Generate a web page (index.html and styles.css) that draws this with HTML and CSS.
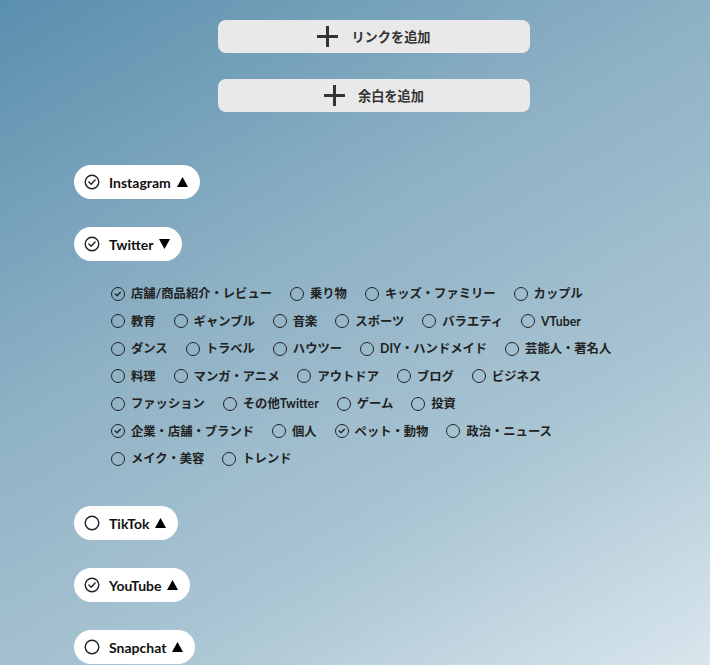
FILE: index.html
```html
<!DOCTYPE html>
<html lang="ja">
<head>
<meta charset="utf-8">
<link rel="stylesheet" href="styles.css">
</head>
<body>
<div class="page">
  <div class="actions">
    <button class="add-btn"><svg class="plus" viewBox="0 0 21 21"><rect x="9" y="0" width="3" height="21"/><rect x="0" y="9" width="21" height="3"/></svg><span>リンクを追加</span></button>
    <button class="add-btn"><svg class="plus" viewBox="0 0 21 21"><rect x="9" y="0" width="3" height="21"/><rect x="0" y="9" width="21" height="3"/></svg><span>余白を追加</span></button>
  </div>

  <div class="sections">
    <div class="section">
      <div class="pill"><svg class="chk" viewBox="0 0 16 16"><circle cx="8" cy="8" r="6.8"/><path d="M4.9 8.1 L7.1 10.2 L11.1 5.9"/></svg><span class="pill-label">Instagram</span><svg class="tri" viewBox="0 0 11 10"><polygon points="5.5,0 11,10 0,10"/></svg></div>
    </div>

    <div class="section">
      <div class="pill"><svg class="chk" viewBox="0 0 16 16"><circle cx="8" cy="8" r="6.8"/><path d="M4.9 8.1 L7.1 10.2 L11.1 5.9"/></svg><span class="pill-label">Twitter</span><svg class="tri" viewBox="0 0 11 10"><polygon points="0,0 11,0 5.5,10"/></svg></div>
      <ul class="cats">
        <li class="cat on">店舗/商品紹介・レビュー</li>
        <li class="cat">乗り物</li>
        <li class="cat">キッズ・ファミリー</li>
        <li class="cat">カップル</li>
        <li class="cat">教育</li>
        <li class="cat">ギャンブル</li>
        <li class="cat">音楽</li>
        <li class="cat">スポーツ</li>
        <li class="cat">バラエティ</li>
        <li class="cat">VTuber</li>
        <li class="cat">ダンス</li>
        <li class="cat">トラベル</li>
        <li class="cat">ハウツー</li>
        <li class="cat">DIY・ハンドメイド</li>
        <li class="cat">芸能人・著名人</li>
        <li class="cat">料理</li>
        <li class="cat">マンガ・アニメ</li>
        <li class="cat">アウトドア</li>
        <li class="cat">ブログ</li>
        <li class="cat">ビジネス</li>
        <li class="cat">ファッション</li>
        <li class="cat">その他Twitter</li>
        <li class="cat">ゲーム</li>
        <li class="cat">投資</li>
        <li class="cat on">企業・店舗・ブランド</li>
        <li class="cat">個人</li>
        <li class="cat on">ペット・動物</li>
        <li class="cat">政治・ニュース</li>
        <li class="cat">メイク・美容</li>
        <li class="cat">トレンド</li>
      </ul>
    </div>

    <div class="section">
      <div class="pill"><svg class="chk off" viewBox="0 0 16 16"><circle cx="8" cy="8" r="6.8"/></svg><span class="pill-label">TikTok</span><svg class="tri" viewBox="0 0 11 10"><polygon points="5.5,0 11,10 0,10"/></svg></div>
    </div>

    <div class="section">
      <div class="pill"><svg class="chk" viewBox="0 0 16 16"><circle cx="8" cy="8" r="6.8"/><path d="M4.9 8.1 L7.1 10.2 L11.1 5.9"/></svg><span class="pill-label">YouTube</span><svg class="tri" viewBox="0 0 11 10"><polygon points="5.5,0 11,10 0,10"/></svg></div>
    </div>

    <div class="section">
      <div class="pill"><svg class="chk off" viewBox="0 0 16 16"><circle cx="8" cy="8" r="6.8"/></svg><span class="pill-label">Snapchat</span><svg class="tri" viewBox="0 0 11 10"><polygon points="5.5,0 11,10 0,10"/></svg></div>
    </div>
  </div>
</div>
</body>
</html>
```

FILE: styles.css
```css
html, body {
  margin: 0;
  padding: 0;
  height: 100%;
}
body {
  background: linear-gradient(150deg, #5a8fae 0%, #8fb2c5 40%, #aac5d3 70%, #d9e6ed 100%);
  font-family: Lato, "Noto Sans CJK JP", sans-serif;
  overflow: hidden;
}
.page {
  width: 600px;
  margin-left: 74px;
  padding-top: 20px;
}
.actions {
  display: flex;
  flex-direction: column;
  align-items: center;
  gap: 26px;
}
.add-btn {
  width: 312px;
  height: 33px;
  border: none;
  border-radius: 8px;
  background: #e9e9e9;
  display: flex;
  align-items: center;
  justify-content: center;
  gap: 13px;
  padding: 0;
  font-family: "Noto Sans CJK JP", sans-serif;
  font-weight: 700;
  font-size: 13.2px;
  color: #333;
}
.plus {
  width: 21px;
  height: 21px;
  fill: #333;
}
.sections {
  margin-top: 53px;
  display: flex;
  flex-direction: column;
  gap: 28px;
}
.pill {
  display: inline-flex;
  align-items: center;
  height: 34px;
  box-sizing: border-box;
  padding: 0 12px 0 10px;
  background: #fff;
  border-radius: 17px;
  align-self: flex-start;
  color: #111;
}
.section {
  display: flex;
  flex-direction: column;
}
.chk {
  width: 16px;
  height: 16px;
  fill: none;
  stroke: #222;
  stroke-width: 1.4;
  stroke-linecap: round;
  stroke-linejoin: round;
}
.pill-label {
  margin-left: 9px;
  font-weight: 700;
  font-size: 14px;
}
.tri {
  width: 11px;
  height: 10px;
  margin-left: 6px;
  fill: #000;
}
.cats {
  list-style: none;
  margin: 23px 0 0;
  padding: 0 60px 10px 37px;
  display: flex;
  flex-wrap: wrap;
  column-gap: 18px;
  row-gap: 8.5px;
}
.cat {
  display: inline-flex;
  align-items: center;
  gap: 6px;
  line-height: 19px;
  font-size: 12.3px;
  font-weight: 700;
  color: #222;
}
.cat::before {
  content: "";
  width: 14px;
  height: 14px;
  box-sizing: border-box;
  border: 1.4px solid #222;
  border-radius: 50%;
  flex: none;
}
.cat.on::before {
  background-image: url("data:image/svg+xml;utf8,<svg xmlns='http://www.w3.org/2000/svg' viewBox='0 0 14 14'><path d='M3.8 7 L5.9 9 L9.8 4.9' fill='none' stroke='%23222' stroke-width='1.5' stroke-linecap='round' stroke-linejoin='round'/></svg>");
  background-size: 100% 100%;
}
```
